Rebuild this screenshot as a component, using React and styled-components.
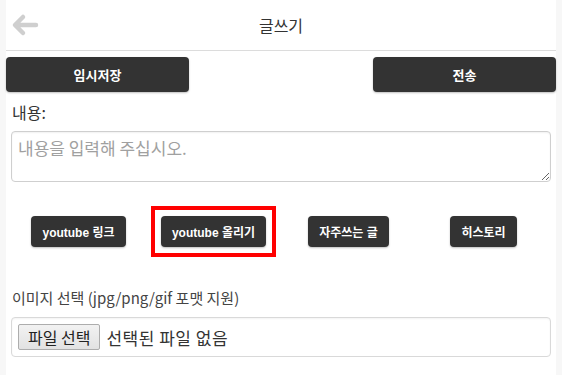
import React from "react";
import styled, { createGlobalStyle } from "styled-components";

const GlobalStyle = createGlobalStyle`
  body {
    margin: 0;
    background: #f7f7f7;
    font-family: "Liberation Sans", "Noto Sans CJK KR", sans-serif;
    color: #333;
  }
`;

const Page = styled.div`
  width: 550px;
  min-height: 375px;
  margin: 0 auto;
  background: #fff;
`;

const Header = styled.header`
  box-sizing: border-box;
  height: 51px;
  display: grid;
  grid-template-columns: 50px 1fr 50px;
  align-items: center;
  border-bottom: 1px solid #dcdcdc;

  .title {
    text-align: center;
    font-family: "Noto Sans CJK KR", sans-serif;
    font-size: 16px;
    color: #333;
  }
`;

const BackButton = styled.button`
  border: 0;
  background: none;
  padding: 0 0 0 4px;
  height: 30px;
  display: flex;
  align-items: center;
  cursor: pointer;
`;

const TopBar = styled.div`
  display: flex;
  justify-content: space-between;
  margin-top: 6px;
`;

const DarkButton = styled.button`
  position: relative;
  box-sizing: border-box;
  width: ${(p) => (p.$wide ? "183px" : "auto")};
  height: ${(p) => (p.$wide ? "35px" : "31px")};
  padding: ${(p) => (p.$wide ? "0" : "0 11px")};
  border: 0;
  border-radius: 4px;
  background: #333;
  color: #fff;
  font-family: "Liberation Sans", "Noto Sans CJK KR", sans-serif;
  font-size: ${(p) => (p.$wide ? "13px" : "12px")};
  font-weight: 700;
  box-shadow: 0 1px 2px rgba(0, 0, 0, 0.25);
  cursor: pointer;

  /* 강조 표시용 빨간 사각형 */
  &::after {
    content: "";
    display: ${(p) => (p.$marked ? "block" : "none")};
    position: absolute;
    inset: -10px;
    border: 4px solid #f00;
    pointer-events: none;
  }
`;

const Form = styled.div`
  padding: 0 5px;
`;

const Label = styled.div`
  font-family: "Noto Sans CJK KR", sans-serif;
  font-size: ${(p) => (p.$small ? "15px" : "16px")};
  line-height: ${(p) => (p.$small ? "22px" : "24px")};
  color: ${(p) => (p.$small ? "#444" : "#333")};
  margin-top: ${(p) => (p.$small ? "40px" : "8px")};
  padding-left: 1px;
`;

const TextArea = styled.textarea`
  display: block;
  box-sizing: border-box;
  width: 100%;
  height: 51px;
  margin-top: 7px;
  padding: 4px 6px;
  border: 1px solid #cfcfcf;
  border-radius: 4px;
  box-shadow: inset 0 1px 2px rgba(0, 0, 0, 0.06);
  font-family: "Noto Sans CJK KR", sans-serif;
  font-size: 17px;
  line-height: 24px;
  color: #333;
  resize: vertical;

  &::placeholder {
    color: #a0a0a0;
  }
`;

const ToolRow = styled.div`
  display: grid;
  grid-template-columns: repeat(4, 1fr);
  justify-items: center;
  margin-top: 34px;
`;

const FileBox = styled.div`
  box-sizing: border-box;
  height: 40px;
  margin-top: 8px;
  padding: 0 6px;
  display: flex;
  align-items: center;
  gap: 6px;
  border: 1px solid #d9d9d9;
  border-radius: 4px;
  box-shadow: inset 0 1px 2px rgba(0, 0, 0, 0.05);
  font-family: "Noto Sans CJK KR", sans-serif;
  font-size: 17px;
  letter-spacing: 0.5px;
  color: #333;
`;

const FileButton = styled.button`
  box-sizing: border-box;
  height: 26px;
  padding: 0 9px;
  border: 1px solid #adadad;
  border-radius: 2px;
  background: linear-gradient(#f2f2f2, #e2e2e2);
  font-family: "Noto Sans CJK KR", sans-serif;
  font-size: 16px;
  line-height: 22px;
  color: #222;
  cursor: pointer;
`;

const tools = [
  { label: "youtube 링크" },
  { label: "youtube 올리기", marked: true },
  { label: "자주쓰는 글" },
  { label: "히스토리" },
];

const App = () => {
  return (
    <>
      <GlobalStyle />
      <Page>
        <Header>
          <BackButton aria-label="뒤로">
            <svg width="30" height="24" viewBox="0 0 30 24">
              <path
                d="M26 12 H6 M13 4 L5 12 L13 20"
                fill="none"
                stroke="#cfcfcf"
                strokeWidth="4.5"
                strokeLinecap="round"
                strokeLinejoin="round"
              />
            </svg>
          </BackButton>
          <div className="title">글쓰기</div>
          <div />
        </Header>

        <TopBar>
          <DarkButton $wide>임시저장</DarkButton>
          <DarkButton $wide>전송</DarkButton>
        </TopBar>

        <Form>
          <Label>내용:</Label>
          <TextArea placeholder="내용을 입력해 주십시오." />

          <ToolRow>
            {tools.map((t) => (
              <DarkButton key={t.label} $marked={t.marked}>
                {t.label}
              </DarkButton>
            ))}
          </ToolRow>

          <Label $small>이미지 선택 (jpg/png/gif 포맷 지원)</Label>
          <FileBox>
            <FileButton>파일 선택</FileButton>
            <span>선택된 파일 없음</span>
          </FileBox>
        </Form>
      </Page>
    </>
  );
};

export default App;
